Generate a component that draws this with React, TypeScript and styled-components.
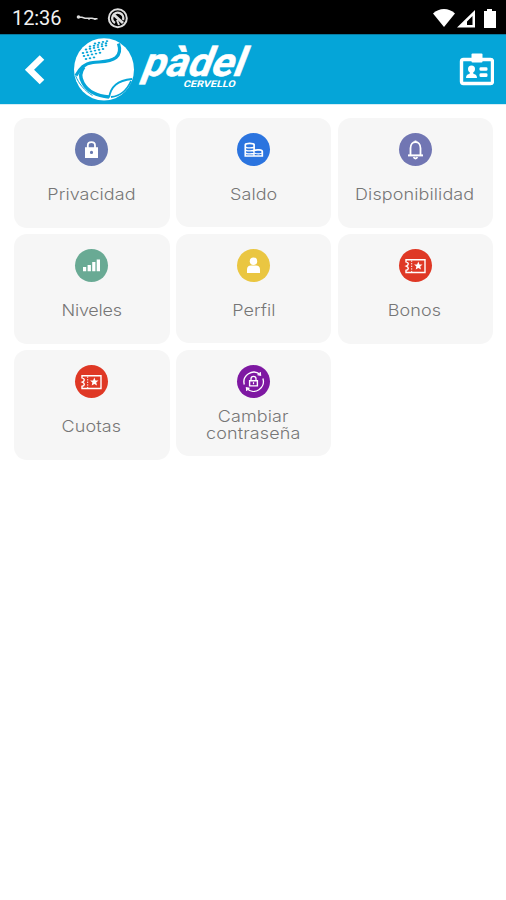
import React from "react";
import styled, { createGlobalStyle } from "styled-components";

const GlobalStyle = createGlobalStyle`
  * { box-sizing: border-box; }
  body { margin: 0; background: #fff; font-family: Inter, "Liberation Sans", sans-serif; }
`;

const Screen = styled.main`
  width: 506px;
  height: 900px;
  background: #fff;
  overflow: hidden;
`;

const StatusBar = styled.div`
  display: flex;
  align-items: center;
  height: 34px;
  padding: 1px 9px 0 12px;
  background: #000;
  color: #f1f1f1;
`;

const Clock = styled.time`
  width: 64px;
  font: 400 20px/34px Roboto, sans-serif;
  letter-spacing: -0.1px;
`;

const StatusIcons = styled.div`
  display: flex;
  align-items: center;
  margin-left: auto;
`;

const Header = styled.header`
  display: flex;
  align-items: center;
  height: 70px;
  padding: 0 12px 0 22px;
  background: #05a5d8;
  border-top: 1px solid #087ba1;
  box-shadow: 0 1px 0 #d5edf5;
`;

const IconButton = styled.button`
  display: flex;
  padding: 0;
  border: 0;
  background: none;
`;

const Brand = styled.svg`
  display: block;
  margin-left: 26px;
  overflow: visible;
`;

const BadgeButton = styled(IconButton)`
  margin-left: auto;
`;

const Grid = styled.section`
  display: grid;
  grid-template-columns: 155.5px 155px 155px;
  grid-auto-rows: 110px;
  gap: 6px 6.5px;
  align-items: start;
  padding: 14px 0 0 14px;
`;

const Card = styled.button<{ $height: number }>`
  display: flex;
  flex-direction: column;
  align-items: center;
  height: ${(p) => p.$height}px;
  padding: 15px 0 0;
  border: 0;
  border-radius: 13px;
  background: #f6f6f6;
`;

const Disc = styled.span<{ $color: string }>`
  display: flex;
  width: 33px;
  height: 33px;
  border-radius: 50%;
  background: ${(p) => p.$color};
`;

const Label = styled.span<{ $spacing: number; $twoLines?: boolean }>`
  margin-top: ${(p) => (p.$twoLines ? 10 : 20)}px;
  color: #767676;
  font: 300 16.5px/17px Inter, sans-serif;
  letter-spacing: ${(p) => p.$spacing}px;
  white-space: pre-line;
  text-align: center;
  transform: scaleX(1.09);
`;

const DiscIcon = ({ children }: { children: React.ReactNode }) => (
  <svg width="33" height="33" viewBox="0 0 33 33" fill="none" stroke="#fff">
    {children}
  </svg>
);

const Lock = () => (
  <DiscIcon>
    <path d="M12.8 15v-2.5c0-4.4 7.2-4.4 7.2 0V15" strokeWidth="1.8" />
    <path d="M10 14.3h13V25H10zM16.5 17.8a1.6 1.6 0 1 0 0 3.2 1.6 1.6 0 0 0 0-3.2z" fill="#fff" fillRule="evenodd" stroke="none" />
  </DiscIcon>
);

const Coins = () => (
  <DiscIcon>
    <path d="M8.3 11.2V23h17v-4.6c0-1.6-6-2-8.2-.9v-6c-1-1.5-7.8-1.5-8.8 0" strokeWidth="1.7" />
    <path d="M9 14.3c2 .8 5 .8 8 .2M9 17.3c2 .8 5 .8 8 .2M9 20.3c2 .8 5 .8 8 .2M17 17v6m.3-3c2 1 6 1 8 0" strokeWidth="1.3" />
  </DiscIcon>
);

const Bell = () => (
  <DiscIcon>
    <path d="M11.5 22v-6.700c0-8.400 10-8.400 10 0V22" strokeWidth="1.8" />
    <path d="M9 22.400h15" strokeWidth="2" />
    <path d="M16.500 9.500v-2M14.700 24c.6 2 3 2 3.600 0" strokeWidth="1.8" />
  </DiscIcon>
);

const Bars = () => (
  <DiscIcon>
    <path d="M8 18h3.2v4.3H8zM12.6 16h3.3v6.3h-3.3zM17.2 13h3.2v9.3h-3.2zM21.7 10.5H25v11.8h-3.3z" fill="#fff" stroke="none" />
  </DiscIcon>
);

const Person = () => (
  <DiscIcon>
    <path d="M10 24v-3.5c0-2.5 1.5-4 4-4h5c2.5 0 4 1.5 4 4V24z" fill="#fff" stroke="none" />
    <circle cx="16.5" cy="12.3" r="3.7" fill="#fff" stroke="none" />
  </DiscIcon>
);

const Ticket = () => (
  <DiscIcon>
    <path d="M7 10.7h19v12.8H7v-2.2c3-.4 3-3 .3-4.2 2.7-1 2.7-3.7-.3-4.2z" strokeWidth="1.4" />
    <path d="M12.7 11.5v11.8" strokeWidth="1" strokeDasharray="1.3 1.3" />
    <path d="m19.3 12.6 1.2 2.8 3 .2-2.3 2 .8 2.9-2.7-1.5-2.6 1.5.7-2.9-2.3-2 3-.2z" fill="#fff" stroke="none" />
  </DiscIcon>
);

const ResetLock = () => (
  <DiscIcon>
    <path d="M7.3 19.5A9.8 9.8 0 0 1 23 9.4M25.9 13.5A9.8 9.8 0 0 1 10 23.8" strokeWidth="1.4" />
    <path d="m20.5 9.6 3 .5-.3-3M12.5 23.5l-3-.6.3 3" strokeWidth="1.3" />
    <path d="M14 15.6v-1.9c0-3.2 5-3.2 5 0v1.9" strokeWidth="1.3" />
    <path d="M12.6 15.7h7.8v5.2h-7.8z" strokeWidth="1.4" />
    <path d="M16.5 17.2v2" strokeWidth="1.2" />
  </DiscIcon>
);

const speckles = [
  [95, 43.5, 4], [90, 46.5, 5], [86, 49.5, 6], [83, 53, 6], [84, 56, 5], [86, 59, 3],
].flatMap(([x, y, count]) =>
  Array.from({ length: count }, (_, i) => ({ x: x + i * 4, y: y - i * 0.8 })),
);

const BrandLogo = () => (
  <Brand width="200" height="69" viewBox="72 35 200 69" role="img" aria-label="pàdel Cervello">
    <ellipse cx="104" cy="69.4" rx="30" ry="31.2" fill="#fff" />
    <g fill="none" stroke="#05a5d8">
      <path d="M76 75.5c4-7 8-12 17-13 8-1 17 0 23-5 4-3.5 4.5-8 2.5-14" strokeWidth="3.2" />
      <path d="M84 67c-4 5-4 11-1 16 5 9 14 13 26 14" strokeWidth="3.4" />
      <path d="M109 97.5c2-11 8-17 23-18.5M111 97c10-1 16-7 20-16" strokeWidth="1.8" />
      <path d="M75.5 75.5c3 8 9 15 17 20" strokeWidth="1" />
    </g>
    {speckles.map((dot) => (
      <ellipse key={`${dot.x}-${dot.y}`} cx={dot.x} cy={dot.y} rx="1.3" ry=".95" fill="#05a5d8" />
    ))}
    <g fill="#fff" fontFamily="Roboto, sans-serif" fontWeight="700">
      <text transform="translate(140 76) skewX(-21)" fontSize="40.5" textLength="102" lengthAdjust="spacingAndGlyphs" stroke="#fff" strokeWidth=".5">pàdel</text>
      <text transform="translate(183 87) skewX(-14)" fontSize="9.3" textLength="52" lengthAdjust="spacingAndGlyphs">CERVELLO</text>
    </g>
  </Brand>
);

const items = [
  { label: "Privacidad", color: "#6879b0", icon: <Lock />, spacing: 0.05, height: 110 },
  { label: "Saldo", color: "#2b74df", icon: <Coins />, spacing: 0.05, height: 109 },
  { label: "Disponibilidad", color: "#7176b3", icon: <Bell />, spacing: 0.1, height: 110 },
  { label: "Niveles", color: "#69aa94", icon: <Bars />, spacing: -0.2, height: 110 },
  { label: "Perfil", color: "#eac641", icon: <Person />, spacing: 0.05, height: 109 },
  { label: "Bonos", color: "#df3825", icon: <Ticket />, spacing: 0.1, height: 110 },
  { label: "Cuotas", color: "#df3825", icon: <Ticket />, spacing: 0.1, height: 110 },
  { label: "Cambiar\ncontraseña", color: "#7e18a2", icon: <ResetLock />, spacing: 0.1, height: 106, twoLines: true },
];

export default function App() {
  return (
    <>
      <GlobalStyle />
      <Screen>
        <StatusBar>
          <Clock>12:36</Clock>
          <svg width="54" height="24" viewBox="76 5 54 24" fill="none" stroke="#ddd">
            <path d="M77 16.2h5l3 1h7l2 .5h3.5M89 17v1.7M95 17v2" strokeWidth="1.5" />
            <circle cx="78.5" cy="16" r="1.8" fill="#ddd" stroke="none" />
            <circle cx="117.8" cy="17.2" r="9" strokeWidth="2" />
            <path d="M115 22a5.5 5.5 0 1 1 8-3" strokeWidth="2.4" />
            <path d="m113.5 13.5 9.5 8.5" strokeWidth="3" />
            <path d="m117 19 2 5" strokeWidth="2" />
          </svg>
          <StatusIcons>
            <svg width="65" height="22" viewBox="432 6 65 22" fill="#fff">
              <path d="M433 12.5c6-6 16-6 22 0L444 26z" />
              <path fillRule="evenodd" d="M475 9v17.5h-18zM472.5 15v9H467v-3.5z" />
              <path d="M487 8h5v2h4v17h-12V10h3z" />
            </svg>
          </StatusIcons>
        </StatusBar>
        <Header>
          <IconButton aria-label="Volver">
            <svg width="24" height="32" viewBox="22 54 24 32" fill="none" stroke="#fff" strokeWidth="6.5">
              <path d="M42 57.5 29.5 69.7 42 82" />
            </svg>
          </IconButton>
          <BrandLogo />
          <BadgeButton aria-label="Carnet">
            <svg width="35" height="34" viewBox="459 53 35 34" fill="#fff">
              <rect x="461.5" y="59.5" width="31" height="24" rx="2" fill="none" stroke="#fff" strokeWidth="3.4" />
              <rect x="471.5" y="53.5" width="11" height="9" rx="1" />
              <circle cx="471.5" cy="69" r="3.5" />
              <path d="M470 71h3l.5 3c2 .3 3.5 1.3 3.5 4h-11c0-2.7 1.5-3.7 3.5-4z" />
              <rect x="479.5" y="67.2" width="8" height="3.5" rx="1.3" />
              <rect x="479.5" y="73.3" width="8" height="3.7" rx="1.3" />
            </svg>
          </BadgeButton>
        </Header>
        <Grid>
          {items.map((item) => (
            <Card key={item.label} $height={item.height}>
              <Disc $color={item.color}>{item.icon}</Disc>
              <Label $spacing={item.spacing} $twoLines={item.twoLines}>{item.label}</Label>
            </Card>
          ))}
        </Grid>
      </Screen>
    </>
  );
}
